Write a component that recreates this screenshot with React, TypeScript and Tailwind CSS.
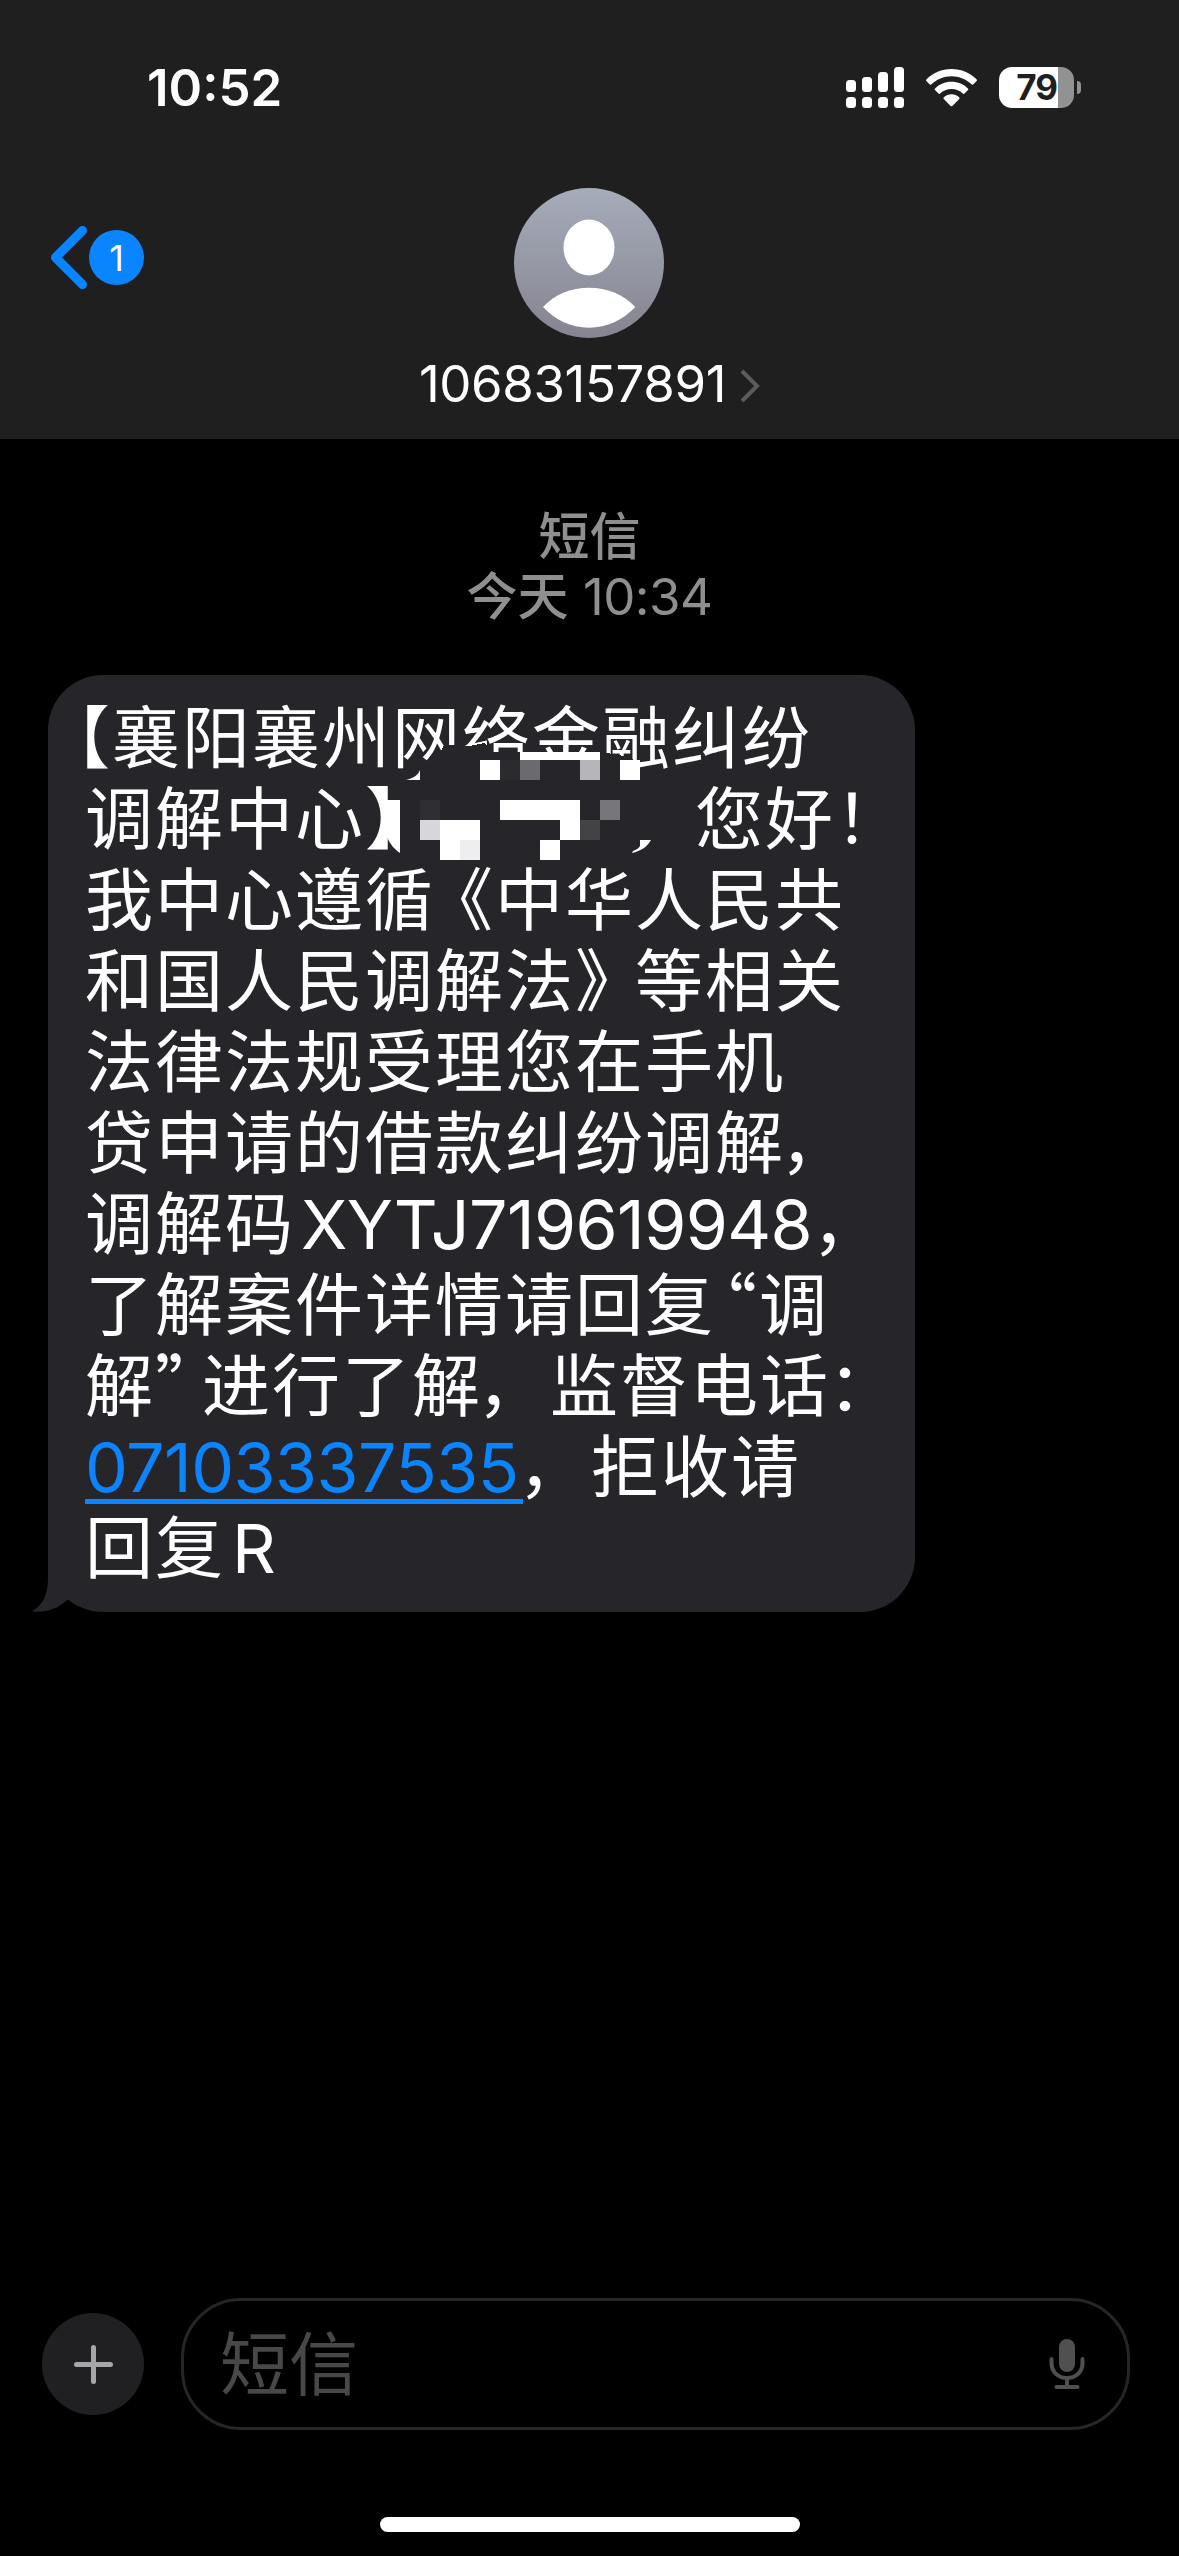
import { ReactNode } from "react";

const SignalIcon = () => (
  <svg width="58" height="41" viewBox="0 0 58 41" fill="#fff">
    <rect x="0" y="13" width="10" height="12" rx="3.5" />
    <rect x="16" y="10" width="10" height="15" rx="3.5" />
    <rect x="32" y="5" width="10" height="20" rx="3.5" />
    <rect x="48" y="0" width="10" height="25" rx="3.5" />
    <rect x="0" y="30" width="10" height="11" rx="3.5" />
    <rect x="16" y="30" width="10" height="11" rx="3.5" />
    <rect x="32" y="30" width="10" height="11" rx="3.5" />
    <rect x="48" y="30" width="10" height="11" rx="3.5" />
  </svg>
);

const WifiIcon = () => (
  <svg width="51" height="38" viewBox="0 0 51 38" fill="#fff">
    <path d="M25.5 0C35.300 0 44.200 3.900 50.500 10.200C51.100 10.800 51.100 11.400 50.600 11.900L47.200 15.400C46.700 15.900 46.100 15.900 45.500 15.300C40.300 10.300 33.300 7.300 25.500 7.300S10.700 10.300 5.500 15.300C4.900 15.900 4.300 15.900 3.800 15.400L.4 11.900C-.1 11.400-.1 10.800.5 10.200C6.800 3.900 15.700 0 25.500 0Z" />
    <path d="M25.500 12.800C31.900 12.800 37.700 15.300 41.900 19.400C42.500 20 42.500 20.600 42 21.100L38.500 24.600C38 25.100 37.400 25 36.800 24.500C33.900 21.700 29.900 20 25.500 20S17.100 21.700 14.200 24.500C13.600 25 13 25.100 12.500 24.600L9 21.100C8.500 20.600 8.500 20 9.100 19.400C13.300 15.300 19.100 12.800 25.500 12.800Z" />
    <path d="M25.500 25.300C28.400 25.300 31.100 26.400 33.100 28.200C33.700 28.800 33.700 29.400 33.200 29.900L26.400 36.900C25.900 37.500 25.100 37.500 24.600 36.900L17.800 29.900C17.300 29.400 17.300 28.800 17.900 28.200C19.900 26.400 22.600 25.300 25.500 25.300Z" />
  </svg>
);

const Battery = () => (
  <div className="flex items-center gap-[3px]">
    <div className="flex h-[41px] w-[75px] items-center justify-center overflow-hidden rounded-[13px] bg-linear-to-r from-white from-[79%] to-[#929292] to-[79%] text-[35px] font-bold leading-none tracking-[-1px] text-[#1f1f1f]">
      79
    </div>
    <div className="h-[13px] w-[4px] rounded-r-full bg-[#929292]" />
  </div>
);

const Avatar = () => (
  <svg width="150" height="150" viewBox="0 0 150 150">
    <defs>
      <linearGradient id="avatar" x1="0" y1="0" x2="0" y2="1">
        <stop offset="0" stopColor="#a6acba" />
        <stop offset="1" stopColor="#858490" />
      </linearGradient>
    </defs>
    <circle cx="75" cy="75" r="75" fill="url(#avatar)" />
    <ellipse cx="75" cy="59.500" rx="25.500" ry="28" fill="#fff" />
    <path
      d="M29 119C41 106 57 99.700 75 99.700S109 106 121.300 119C109 132 93 139.700 75 139.700S41 132 29 119Z"
      fill="#fff"
    />
  </svg>
);

const MicIcon = () => (
  <svg width="36" height="51" viewBox="0 0 36 51" fill="none" stroke="#505050">
    <rect x="10" y="0" width="16" height="33" rx="8" fill="#505050" stroke="none" />
    <path
      d="M2.500 20V24C2.500 33 9 39 18 39S33.500 33 33.500 24V20M18 39V47M7.500 48H28.500"
      strokeWidth="4"
      strokeLinecap="round"
    />
  </svg>
);

const BubbleTail = () => (
  <svg
    className="absolute -left-[16px] bottom-0 -z-10"
    width="71"
    height="55"
    viewBox="0 0 71 55"
    fill="#26252a"
  >
    <path d="M16 0V22C16 38 10 49 0 54.300C13 56.500 26 51.500 35.500 43L71 0Z" />
  </svg>
);

const blocks = [
  { x: 133, y: 77, w: 80, h: 8, fill: "#ffffff" },
  { x: 93, y: 85, w: 20, h: 20, fill: "#ffffff" },
  { x: 113, y: 85, w: 20, h: 20, fill: "#2b2a2e" },
  { x: 133, y: 85, w: 20, h: 20, fill: "#6b6a6f" },
  { x: 193, y: 85, w: 20, h: 20, fill: "#b6b5ba" },
  { x: 233, y: 85, w: 20, h: 20, fill: "#ffffff" },
  { x: 33, y: 125, w: 20, h: 20, fill: "#2f2e32" },
  { x: 113, y: 125, w: 80, h: 20, fill: "#ffffff" },
  { x: 213, y: 125, w: 20, h: 20, fill: "#77767b" },
  { x: 33, y: 145, w: 20, h: 20, fill: "#d7d6db" },
  { x: 53, y: 145, w: 40, h: 20, fill: "#ffffff" },
  { x: 173, y: 145, w: 20, h: 20, fill: "#ffffff" },
  { x: 193, y: 145, w: 20, h: 20, fill: "#434244" },
  { x: 53, y: 165, w: 20, h: 20, fill: "#ffffff" },
  { x: 73, y: 165, w: 20, h: 20, fill: "#eeeef0" },
  { x: 153, y: 165, w: 20, h: 20, fill: "#ffffff" },
];

// Pixelated patch that hides the recipient's name
const Mosaic = () => (
  <svg
    className="absolute left-[339px] top-0"
    width="280"
    height="190"
    viewBox="0 0 280 190"
    shapeRendering="crispEdges"
  >
    <path
      d="M13 125L33 96L49 86L57 70L82 71L98 68L104 77H213L233 80L253 87V188H13Z"
      fill="#26252a"
    />
    {blocks.map((b) => (
      <rect key={`${b.x}-${b.y}`} x={b.x} y={b.y} width={b.w} height={b.h} fill={b.fill} />
    ))}
    <g fill="#fff" shapeRendering="auto">
      <path d="M0 125H13V178C7 174 3 169 0 162Z" />
      <path d="M19 105C27 103 31 100 33 95V105Z" />
      <path d="M253 165H264C260 172 254 176 245 178L246 176C249 175 252 173 253 171Z" />
    </g>
  </svg>
);

const Line = ({ children }: { children: ReactNode }) => (
  <div className="h-[81px] whitespace-nowrap">{children}</div>
);

// Half-width CJK punctuation
const Half = ({ children, className }: { children: ReactNode; className: string }) => (
  <span
    className={`font-['Noto_Sans_CJK_SC',sans-serif] leading-none [font-feature-settings:'halt'] ${className}`}
  >
    {children}
  </span>
);

const Comma = () => <span className="-ml-[5px] mr-[3px]">，</span>;

const Message = () => (
  <div className="relative isolate ml-[48px] h-[937px] w-[867px] rounded-[55px] bg-[#26252a] pl-[37px] pt-[23px] text-[68px] leading-[81px] tracking-[2px] text-white">
    <BubbleTail />
    <Line>
      <Half className="-ml-[9px]">【</Half>襄阳襄州网络金融纠纷
    </Line>
    <Line>
      调解中心】<span className="ml-[260px]">您好！</span>
    </Line>
    <Line>
      我中心遵循<Half className="ml-[24px]">《</Half>中华人民共
    </Line>
    <Line>
      和国人民调解法<Half className="mr-[24px]">》</Half>等相关
    </Line>
    <Line>法律法规受理您在手机</Line>
    <Line>
      贷申请的借款纠纷调解
      <Comma />
    </Line>
    <Line>
      调解码
      <span className="ml-[6px] tracking-[-0.600px]">XYTJ719619948</span>
      <span>，</span>
    </Line>
    <Line>
      了解案件详情请回复<Half className="ml-[8px]">“</Half>调
    </Line>
    <Line>
      解<Half className="mr-[11px]">”</Half>进行了解
      <Comma />
      监督电话<span className="-ml-[2px]">：</span>
    </Line>
    <Line>
      <a className="relative inline-block h-[81px] w-[438px] tracking-[-0.500px] text-[#0a84ff]">
        07103337535
        <span className="absolute left-0 top-[72px] h-[5px] w-full bg-[#0a84ff]" />
      </a>
      <Comma />
      拒收请
    </Line>
    <Line>
      回复<span className="ml-[7px]">R</span>
    </Line>
    <Mosaic />
  </div>
);

const Header = () => (
  <header className="h-[439px] bg-[#1f1f1f]">
    <div className="flex h-[188px] items-start justify-between pl-[147px] pr-[98px] pt-[67px]">
      <p className="text-[51px] font-semibold leading-[42px]">10:52</p>
      <div className="flex items-center gap-[22px]">
        <SignalIcon />
        <WifiIcon />
        <Battery />
      </div>
    </div>
    <div className="grid grid-cols-[1fr_auto_1fr]">
      <div className="mt-[38px] flex h-[63px] items-center pl-[50px]">
        <svg width="37" height="63" viewBox="0 0 37 63" className="shrink-0">
          <path
            d="M32.500 4.500L5.500 31.500L32.500 58.500"
            fill="none"
            stroke="#0a84ff"
            strokeWidth="9"
            strokeLinecap="round"
            strokeLinejoin="round"
          />
        </svg>
        <span className="ml-[2px] flex size-[55px] items-center justify-center rounded-full bg-[#0a84ff] text-[36px] leading-none">
          1
        </span>
      </div>
      <div className="flex flex-col items-center">
        <Avatar />
        <div className="mt-[20px] flex items-center gap-[14px]">
          <p className="text-[51px] leading-[52px] tracking-[-0.400px]">10683157891</p>
          <svg width="20" height="34" viewBox="0 0 20 34" className="mt-[4px]">
            <path d="M2 2L17 17L2 32" fill="none" stroke="#5c5c5e" strokeWidth="4" />
          </svg>
        </div>
      </div>
      <div />
    </div>
  </header>
);

const Composer = () => (
  <footer className="mt-[686px] flex items-center pl-[42px]">
    <button className="flex size-[102px] items-center justify-center rounded-full bg-[#202022]">
      <svg width="39" height="39" viewBox="0 0 39 39">
        <path
          d="M19.500 2.500V36.500M2.500 19.500H36.500"
          stroke="#a6a6a8"
          strokeWidth="5"
          strokeLinecap="round"
        />
      </svg>
    </button>
    <div className="ml-[37px] flex h-[132px] w-[949px] items-center justify-between rounded-[60px] border-[3px] border-[#262626] pl-[36px] pr-[42px]">
      <span className="pt-[2px] text-[69px] leading-[81px] text-[#48484a]">短信</span>
      <MicIcon />
    </div>
  </footer>
);

export default function App() {
  return (
    <div className="h-[2556px] w-[1179px] overflow-hidden bg-black font-['Inter','Noto_Sans_CJK_SC',sans-serif] text-white">
      <Header />
      <div className="h-[236px] pt-[68px] text-center text-[51px] leading-[60px] text-[#8f8f8f]">
        <p className="font-medium">短信</p>
        <p>
          <span className="font-medium">今天</span>{" "}
          <span className="tracking-[-0.500px]">10:34</span>
        </p>
      </div>
      <Message />
      <Composer />
      <div className="mx-auto mt-[87px] h-[15px] w-[420px] rounded-full bg-white" />
    </div>
  );
}
